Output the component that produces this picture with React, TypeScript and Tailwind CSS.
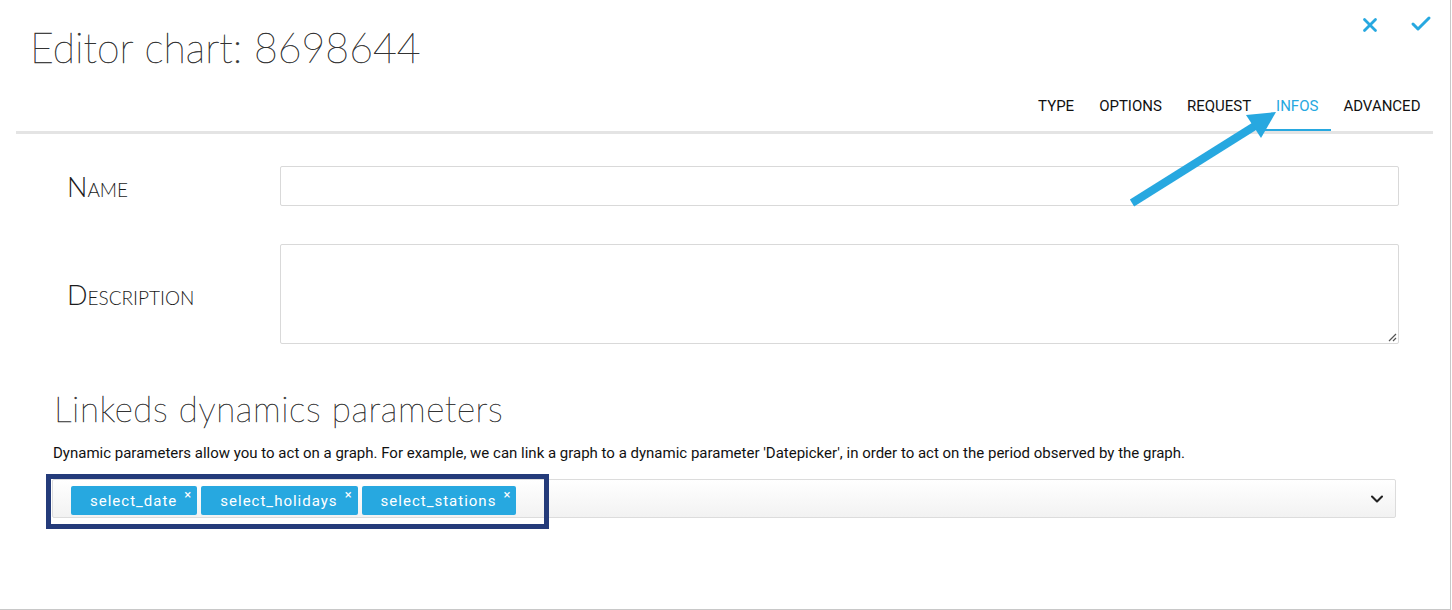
import { Check, ChevronDown, X } from "lucide-react"

const tabs = ["TYPE", "OPTIONS", "REQUEST", "INFOS", "ADVANCED"]
const params = ["select_date", "select_holidays", "select_stations"]

// hairline face plus a faint stroke, closer to the thin geometric heading font
const thin = "font-['Lato','DejaVu_Sans',sans-serif] font-thin [-webkit-text-stroke:0.45px_#333]"

function Label({ text }: { text: string }) {
  return (
    <div className="font-['Lato',sans-serif] font-light text-[27px] text-[#1b1b1b] [font-variant:small-caps] leading-none">{text}</div>
  )
}

export default function App() {
  return (
    <div className="relative h-[610px] w-[1452px] overflow-hidden bg-white font-['Roboto',sans-serif]">
      <div className="h-[610px] w-[1451px] border-r border-b border-[#c8c8c8]">
        <header className="flex items-start justify-between pl-[30px] pr-[17px] pt-[24px]">
          <h1 className={`${thin} text-[41px] leading-[48px] text-[#333]`}>Editor chart: 8698644</h1>
          <div className="flex items-center gap-[28px] text-[#27a8e0]">
            <X size={22} strokeWidth={3} className="-mt-[10px]" />
            <Check size={24} strokeWidth={3} className="-mt-[12px]" />
          </div>
        </header>

        <nav className="mt-[24px] flex justify-end pr-[17px]">
          {tabs.map((t) => (
            <div
              key={t}
              className={`px-[12.5px] pb-[13px] text-[15px] font-normal leading-[20px] ${t === "INFOS" ? "border-b-2 border-[#27a8e0] text-[#27a8e0]" : "border-b-2 border-transparent text-[#111]"}`}
            >
              {t}
            </div>
          ))}
        </nav>
        <div className="ml-4 mr-[17px] h-[3px] bg-[#e4e4e4]" />

        <section className="grid grid-cols-[213px_1fr] items-center gap-y-[38px] pl-[67px] pr-[51px] pt-[32px]">
          <Label text="Name" />
          <div className="h-[40px] rounded-[2px] border border-[#d9d9d9] bg-white" />
          <Label text="Description" />
          <div className="relative h-[100px] rounded-[2px] border border-[#d9d9d9] bg-white">
            <svg className="absolute right-[1px] bottom-[1px]" width="10" height="10" viewBox="0 0 10 10">
              <path d="M9 2 L2 9 M9 6 L6 9" stroke="#555" strokeWidth="1.2" />
            </svg>
          </div>
        </section>

        <section className="pl-[52px] pr-[54px] pt-[44px]">
          <h2 className={`${thin} pl-[2px] text-[35px] leading-[40px] tracking-[0.6px] text-[#333]`}>Linkeds dynamics parameters</h2>
          <p className="mt-[15px] pl-[1px] text-[15px] leading-[20px] text-[#111]">
            Dynamic parameters allow you to act on a graph. For example, we can link a graph to a dynamic parameter 'Datepicker', in order to act on the period observed by the graph.
          </p>
          <div className="mt-[16px] flex h-[39px] items-center justify-between rounded-[2px] border border-[#dcdcdc] bg-gradient-to-b from-white to-[#f2f2f2] pt-[3px] pl-[18px] pr-[8px]">
            <div className="flex gap-[4px]">
              {params.map((p) => (
                <span
                  key={p}
                  className="relative flex h-[29px] items-center rounded-[2px] bg-[#27a8e0] pt-[2px] pl-[19px] pr-[20px] text-[15px] tracking-[1px] text-white"
                >
                  {p}
                  <span className="absolute top-[2px] right-[6px] text-[13px] leading-none tracking-normal">×</span>
                </span>
              ))}
            </div>
            <ChevronDown size={20} strokeWidth={2.5} className="-mt-[3px] text-[#222]" />
          </div>
        </section>
      </div>

      {/* annotations */}
      <div className="absolute top-[474px] left-[46px] h-[55px] w-[503px] border-[5px] border-[#243b7a]" />
      <svg className="absolute top-0 left-0" width="1452" height="610" viewBox="0 0 1452 610">
        <line x1="1132" y1="203" x2="1258" y2="124" stroke="#27a8e0" strokeWidth="8" />
        <polygon points="1276,112 1246,115 1261,138" fill="#27a8e0" />
      </svg>
    </div>
  )
}
